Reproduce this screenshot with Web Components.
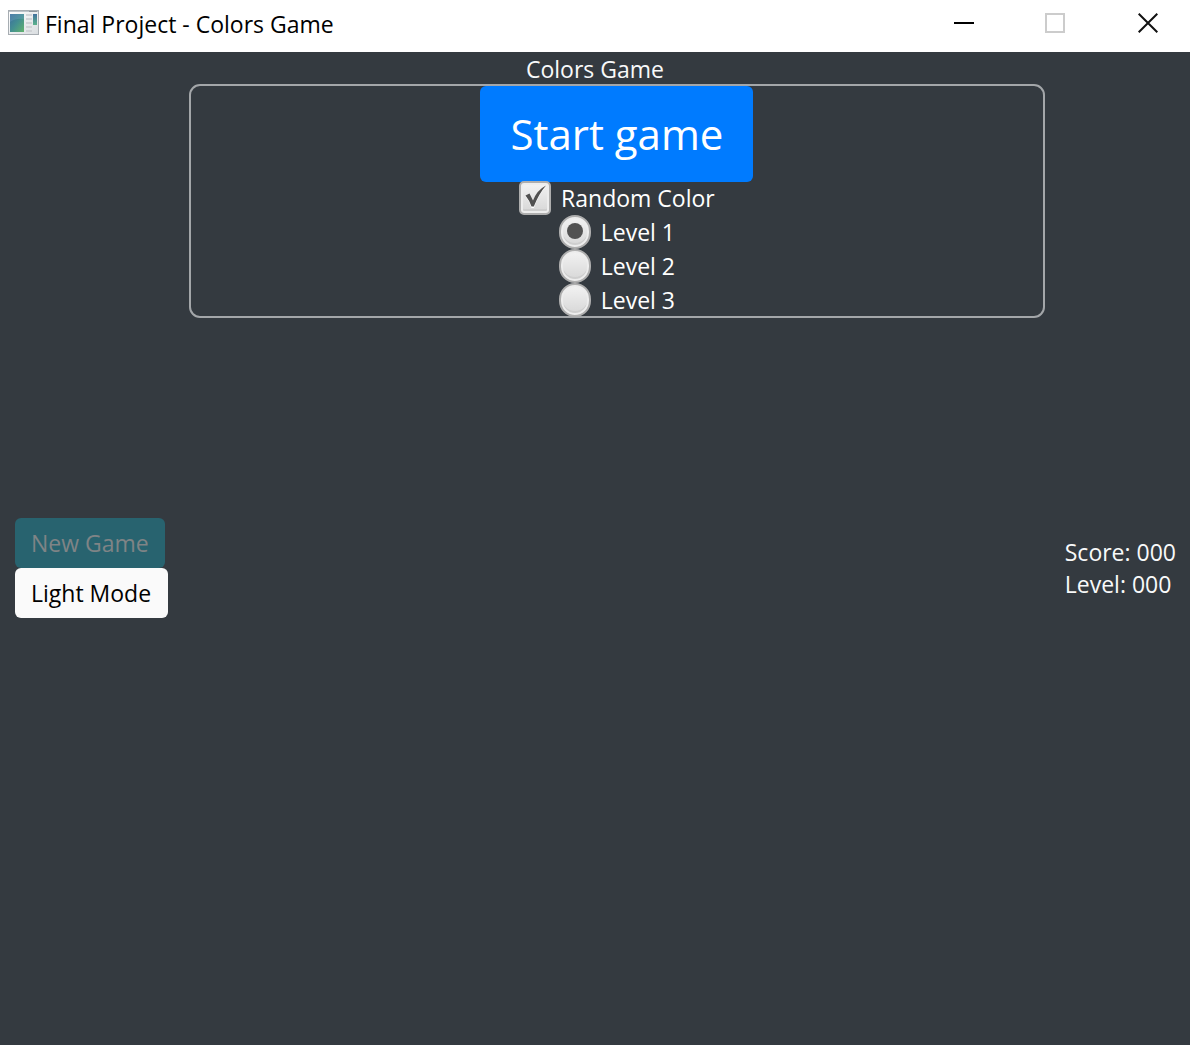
<!DOCTYPE html>
<html lang="en">
<head>
<meta charset="utf-8">
<title>Final Project - Colors Game</title>
<style>
html, body { height: 100%; margin: 0; }
body { font: 23px/32px "Open Sans", "Noto Sans", sans-serif; background: #343a40; color: #f8f9fa; }
</style>
</head>
<body>
<game-window></game-window>
<script>
const define = (name, html) => {
  const template = document.createElement('template');
  template.innerHTML = html;
  customElements.define(name, class extends HTMLElement {
    constructor() {
      super();
      this.attachShadow({ mode: 'open' }).append(template.content.cloneNode(true));
    }
  });
};

define('app-icon', `
<style>:host { display: block; width: 32px; height: 26px; } svg { display: block; }</style>
<svg width="32" height="26" viewBox="0 0 32 26" aria-hidden="true">
  <defs>
    <linearGradient id="p" x1="0" y1="0" x2="1" y2="1"><stop offset="0" stop-color="#3b6c9e"/><stop offset=".5" stop-color="#438f91"/><stop offset="1" stop-color="#62b36c"/></linearGradient>
    <linearGradient id="q" x1="0" y1="0" x2="0" y2="1"><stop offset="0" stop-color="#41719e"/><stop offset="1" stop-color="#5bb28b"/></linearGradient>
    <linearGradient id="f" x1="0" y1="0" x2="1" y2="1"><stop offset="0" stop-color="#ffffff"/><stop offset="1" stop-color="#d9dde0"/></linearGradient>
  </defs>
  <rect x=".5" y=".5" width="30" height="24" fill="url(#f)" stroke="#a7adb2"/>
  <path d="M1 1.5H30" stroke="#bcc3c9"/><path d="M21 1.5h8" stroke="#8f979e"/>
  <rect x="2" y="4" width="14" height="18" fill="url(#p)"/>
  <path d="M2 12Q8 8 16 9V4H2Z" fill="#7ba8c6" opacity=".3"/>
  <path d="M18 5h6M18 9h6M18 13h6M18 17h6M18 21h6" stroke="#c9cccf" stroke-width="1.5"/>
  <rect x="25" y="4" width="4" height="11" fill="url(#q)"/>
</svg>`);

define('title-bar', `
<style>
:host { display: flex; align-items: flex-start; height: 52px; background: #fff; color: #000; }
app-icon { margin: 10px 5px 0 8px; }
h1 { flex: 1; margin: 8px 0 0; font: inherit; }
nav { display: flex; }
button { width: 91px; height: 46px; padding: 0; border: 0; background: none; display: grid; place-items: center; }
button:last-child { width: 84px; margin-left: 6px; }
svg { display: block; }
</style>
<app-icon></app-icon><h1><slot></slot></h1>
<nav>
  <button type="button" aria-label="Minimize"><svg width="20" height="20"><path d="M0 10H20" stroke="#000" stroke-width="2"/></svg></button>
  <button type="button" aria-label="Maximize" disabled><svg width="20" height="20"><path d="M1 1H19V19H1Z" fill="none" stroke="#ccc" stroke-width="2"/></svg></button>
  <button type="button" aria-label="Close"><svg width="20" height="20"><path d="M.7 .7L19.3 19.3M19.3 .7L.7 19.3" stroke="#111" stroke-width="2"/></svg></button>
</nav>`);

define('start-panel', `
<style>
:host { display: block; }
form { display: flex; flex-direction: column; align-items: center; box-sizing: border-box; border: 2px solid #a3a6a9; border-radius: 11px; }
.start { height: 96px; padding: 0 30px; border: 0; border-radius: 6px; background: #007bff; color: #fff; font: inherit; font-size: 42px; }
.options { display: flex; flex-direction: column; align-items: center; margin: -1px 0; }
label { display: flex; align-items: center; gap: 10px; height: 34px; color: #fff; }
fieldset { margin: 0; padding: 0; border: 0; }
input { appearance: none; display: grid; place-items: center; box-sizing: border-box; width: 32px; height: 34px; margin: 0; border: 2px solid #aeaeae; background: linear-gradient(#f3f3f3, #d6d6d6); box-shadow: inset 0 0 0 2px #ededed, inset 0 -3px 0 1px #cecece; }
input[type=checkbox] { border-radius: 5px; }
input[type=radio] { border-radius: 16px; }
input[type=radio]:checked::before { content: ""; width: 16px; height: 16px; border-radius: 50%; background: #525252; margin-bottom: 2px; }
.box { display: grid; }
.box > * { grid-area: 1 / 1; }
.box svg { pointer-events: none; }
</style>
<form>
  <button class="start" type="button">Start game</button>
  <div class="options">
    <label><span class="box"><input type="checkbox" checked><svg width="32" height="34" aria-hidden="true"><path id="tick" d="M6.5 15.5L10.5 13.5L14 20Q18 9.500 27 5.500Q20 13 14.800 27H12.500Q10.500 20.500 6.500 15.500Z" fill="#fff"/><path d="M6.500 14.500L10.500 12.500L14 19.500Q18 9 27 4.500Q20 12.500 14.800 25.500H12.500Q10.500 19.500 6.500 14.500Z" fill="#505050"/></svg></span>Random Color</label>
    <fieldset aria-label="Level">
      <label><input type="radio" name="level" checked>Level 1</label>
      <label><input type="radio" name="level">Level 2</label>
      <label><input type="radio" name="level">Level 3</label>
    </fieldset>
  </div>
</form>`);

define('side-actions', `
<style>
:host { display: flex; flex-direction: column; align-items: flex-start; }
button { height: 50px; padding: 0 16px; border: 0; border-radius: 6px; font: inherit; white-space: nowrap; }
.new { background: #28636f; color: #7f8486; }
.mode { padding: 0 17px 0 16px; background: #fafafa; color: #000; }
</style>
<button class="new" type="button" disabled>New Game</button>
<button class="mode" type="button">Light Mode</button>`);

define('score-board', `
<style>:host { display: block; white-space: nowrap; } p { margin: 0; }</style>
<p>Score: 000</p><p>Level: 000</p>`);

define('game-window', `
<style>
:host { display: flex; flex-direction: column; min-height: 100vh; }
h2 { margin: 1px 0 0; font: inherit; text-align: center; }
main { flex: 1; display: grid; grid-template-columns: minmax(154px, auto) 1fr minmax(110px, auto); gap: 20px; padding: 0 14px 0 15px; }
side-actions, score-board { align-self: center; margin-top: 6px; }
start-panel { margin-top: -1px; }
</style>
<title-bar>Final Project - Colors Game</title-bar>
<h2>Colors Game</h2>
<main><side-actions></side-actions><start-panel></start-panel><score-board></score-board></main>`);
</script>
</body>
</html>
